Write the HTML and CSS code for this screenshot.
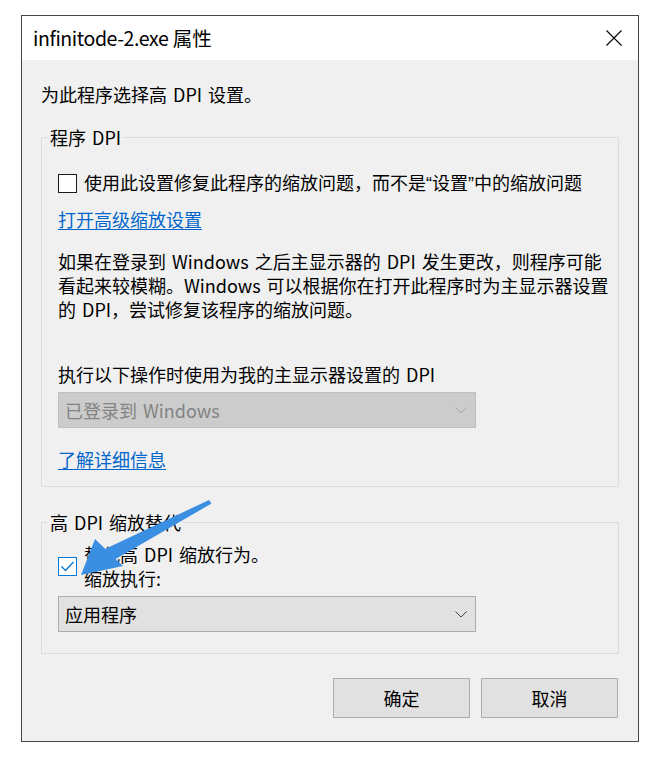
FILE: index.html
```html
<!DOCTYPE html>
<html lang="zh-CN">
<head>
<meta charset="utf-8">
<link rel="stylesheet" href="styles.css">
</head>
<body>
<div class="window">
  <div class="titlebar">
    <span class="title"><span class="lat">infinitode-2.exe</span> 属性</span>
    <svg class="close" width="16" height="16" viewBox="0 0 16 16"><path d="M0.5 0.5 L15.5 15.5 M15.5 0.5 L0.5 15.5" stroke="#000" stroke-width="1.1" fill="none"/></svg>
  </div>
  <div class="body">
    <div class="intro">为此程序选择高 DPI 设置。</div>
    <fieldset class="group g1">
      <legend>程序 DPI</legend>
      <div class="inner">
        <div class="check-row">
          <span class="box"></span>
          <span class="label">使用此设置修复此程序的缩放问题，而不是<span class="q">“</span>设置<span class="q">”</span>中的缩放问题</span>
        </div>
        <a class="link l1">打开高级缩放设置</a>
        <p class="para">如果在登录到 Windows 之后主显示器的 DPI 发生更改，则程序可能<br>看起来较模糊。Windows 可以根据你在打开此程序时为主显示器设置<br>的 DPI，尝试修复该程序的缩放问题。</p>
        <div class="sel-label">执行以下操作时使用为我的主显示器设置的 DPI</div>
        <div class="select disabled">
          <span>已登录到 Windows</span>
          <svg width="12" height="7" viewBox="0 0 12 7"><path d="M0.5 0.5 L6 6 L11.5 0.5" stroke="#a6a6a6" stroke-width="1" fill="none"/></svg>
        </div>
        <a class="link l2">了解详细信息</a>
      </div>
    </fieldset>
    <fieldset class="group g2">
      <legend>高 DPI 缩放替代</legend>
      <div class="inner inner2">
        <div class="check-row two">
          <span class="box checked"><svg width="17" height="17" viewBox="0 0 17 17"><path d="M2.5 8.5 L6.5 12.5 L14.5 4" stroke="#0078d7" stroke-width="1.3" fill="none"/></svg></span>
          <span class="label">替代高 DPI 缩放行为。<br>缩放执行:</span>
        </div>
        <div class="select">
          <span>应用程序</span>
          <svg width="12" height="7" viewBox="0 0 12 7"><path d="M0.5 0.5 L6 6 L11.5 0.5" stroke="#404040" stroke-width="1" fill="none"/></svg>
        </div>
      </div>
    </fieldset>
    <div class="buttons">
      <button class="btn">确定</button>
      <button class="btn">取消</button>
    </div>
  </div>
  <svg class="arrow" width="662" height="758" viewBox="0 0 662 758">
    <polygon points="209,500 211.5,503.5 114,560 105,549" fill="#3b8fe3"/>
    <polygon points="81,575 95,539 123,566" fill="#3b8fe3"/>
  </svg>
</div>
</body>
</html>
```
FILE: styles.css
```css
html, body {
  margin: 0;
  padding: 0;
  background: #ffffff;
}
body {
  font-family: "Noto Sans CJK SC", "Noto Sans", sans-serif;
  font-size: 18px;
  line-height: 24px;
  color: #000;
  word-spacing: 2px;
}
.window {
  margin: 15px 0 0 21px;
  width: 618px;
  height: 727px;
  box-sizing: border-box;
  border: 1px solid #474747;
  background: #f0f0f0;
  display: flex;
  flex-direction: column;
}
.titlebar {
  height: 44px;
  background: #ffffff;
  display: flex;
  align-items: center;
  justify-content: space-between;
  padding: 0 16px 0 11px;
  flex-shrink: 0;
}
.title {
  font-size: 19.5px;
  line-height: 24px;
  word-spacing: 0;
}
.title .lat {
  letter-spacing: -0.4px;
}
.close {
  display: block;
}
.body {
  padding: 22px 19px 0 19px;
  flex: 1;
  display: flex;
  flex-direction: column;
}
.intro {
  height: 24px;
}
.group {
  margin: 19px 0 0 0;
  padding: 0;
  border: 1px solid #dcdcdc;
  min-width: 0;
}
.group legend {
  margin-left: 6px;
  padding: 0 2px;
  line-height: 24px;
}
.g2 {
  margin-top: 23px;
}
.inner {
  padding: 21px 16px 15px 16px;
  display: flex;
  flex-direction: column;
  align-items: flex-start;
}
.inner2 {
  padding-top: 8px;
  padding-bottom: 21px;
}
.check-row {
  display: flex;
  align-items: center;
  gap: 7px;
}
.box {
  width: 19px;
  height: 19px;
  box-sizing: border-box;
  border: 1.5px solid #1a1a1a;
  background: #ffffff;
  display: flex;
  align-items: center;
  justify-content: center;
  flex-shrink: 0;
}
.box.checked {
  border-color: #0078d7;
}
.box svg {
  display: block;
}
.q {
  font-family: "Liberation Sans", sans-serif;
}
.link {
  color: #0066cc;
  text-decoration: underline;
  text-underline-offset: 2px;
}
.l1 {
  margin-top: 11px;
}
.para {
  margin: 18px 0 0 0;
  white-space: nowrap;
}
.sel-label {
  margin-top: 41px;
}
.select {
  margin-top: 6px;
  width: 418px;
  height: 36px;
  box-sizing: border-box;
  border: 1px solid #adadad;
  background: #e1e1e1;
  display: flex;
  align-items: center;
  justify-content: space-between;
  padding: 0 8px 0 6px;
}
.select.disabled {
  background: #cccccc;
  border-color: #bfbfbf;
  color: #838383;
}
.select svg {
  display: block;
}
.l2 {
  margin-top: 19px;
}
.buttons {
  margin-top: 24px;
  display: flex;
  justify-content: flex-end;
  gap: 11px;
  padding-right: 1px;
}
.btn {
  width: 137px;
  height: 40px;
  border: 1px solid #adadad;
  background: #e1e1e1;
  font-family: "Noto Sans CJK SC", sans-serif;
  font-size: 18px;
  color: #000;
  padding: 0;
}
.arrow {
  position: absolute;
  left: 0;
  top: 0;
  pointer-events: none;
}
```
